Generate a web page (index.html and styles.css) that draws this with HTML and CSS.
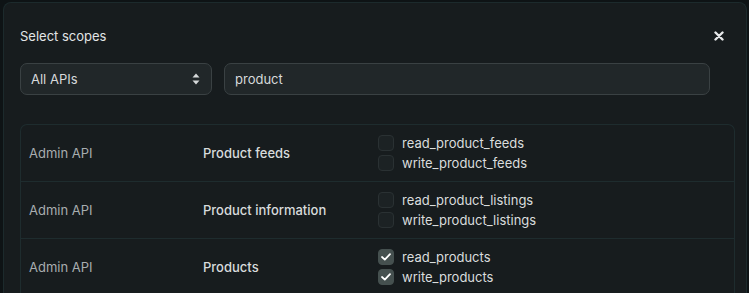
FILE: index.html
```html
<!DOCTYPE html>
<html>
<head>
<meta charset="utf-8">
<link rel="stylesheet" href="styles.css">
</head>
<body>
<div class="modal">
  <div class="header">
    <h2 class="title">Select scopes</h2>
    <button class="close" aria-label="Close">
      <svg width="10" height="10" viewBox="0 0 10 10"><path d="M1.5 1.5 L8.5 8.5 M8.5 1.5 L1.5 8.5" stroke="#e6e8e9" stroke-width="2.4" stroke-linecap="round"/></svg>
    </button>
  </div>
  <div class="filters">
    <div class="select">
      <span>All APIs</span>
      <svg class="arrows" width="8" height="12" viewBox="0 0 8 12"><path d="M4 0.5 L7.5 4.5 H0.5 Z M4 11.5 L7.5 7.5 H0.5 Z" fill="#d6d9da"/></svg>
    </div>
    <div class="input">product</div>
  </div>
  <div class="table">
    <div class="row">
      <div class="api">Admin API</div>
      <div class="name">Product feeds</div>
      <div class="scopes">
        <label class="scope"><span class="box"></span>read_product_feeds</label>
        <label class="scope"><span class="box"></span>write_product_feeds</label>
      </div>
    </div>
    <div class="row">
      <div class="api">Admin API</div>
      <div class="name">Product information</div>
      <div class="scopes">
        <label class="scope"><span class="box"></span>read_product_listings</label>
        <label class="scope"><span class="box"></span>write_product_listings</label>
      </div>
    </div>
    <div class="row">
      <div class="api">Admin API</div>
      <div class="name">Products</div>
      <div class="scopes">
        <label class="scope"><span class="box checked"><svg width="10" height="8" viewBox="0 0 10 8"><path d="M1 4 L3.8 6.6 L9 1.2" stroke="#fff" stroke-width="1.8" fill="none" stroke-linecap="round" stroke-linejoin="round"/></svg></span>read_products</label>
        <label class="scope"><span class="box checked"><svg width="10" height="8" viewBox="0 0 10 8"><path d="M1 4 L3.8 6.6 L9 1.2" stroke="#fff" stroke-width="1.8" fill="none" stroke-linecap="round" stroke-linejoin="round"/></svg></span>write_products</label>
      </div>
    </div>
  </div>
</div>
</body>
</html>
```

FILE: styles.css
```css
* { box-sizing: border-box; }
html, body {
  margin: 0;
  padding: 0;
  background: #0e1315;
  height: 293px;
  overflow: hidden;
}
body {
  padding: 2px 2px 0 3px;
  font-family: Inter, "Noto Sans", sans-serif;
  font-size: 13px;
  color: #d6d9da;
}
.modal {
  background: #171c1e;
  border: 1px solid #1c2a2c;
  border-bottom: none;
  border-radius: 8px 8px 0 0;
  height: 291px;
  padding: 0 11px 0 16px;
}
.header {
  display: flex;
  align-items: center;
  justify-content: space-between;
  height: 65px;
  padding: 1px 11px 0 0;
  margin-bottom: -5px;
}
.title {
  margin: 0;
  font-size: 13px;
  font-weight: 400;
  color: #e2e5e6;
}
.close {
  background: none;
  border: none;
  padding: 0;
  width: 10px;
  height: 10px;
  display: flex;
}
.filters {
  display: flex;
  gap: 12px;
  padding-right: 25px;
}
.select, .input {
  height: 32px;
  background: #212729;
  border: 1px solid #3a4143;
  border-radius: 7px;
  display: flex;
  align-items: center;
  color: #d7dadb;
}
.select {
  width: 192px;
  padding: 0 11px 0 10px;
  justify-content: space-between;
}
.input {
  flex: 1;
  padding: 0 10px;
}
.table {
  margin-top: 29px;
  border: 1px solid #1e2c2e;
  border-bottom: none;
  border-radius: 7px 7px 0 0;
}
.row {
  display: grid;
  grid-template-columns: 174px 175px 1fr;
  align-items: center;
  height: 57px;
  padding-left: 8px;
  border-bottom: 1px solid #1e2c2e;
}
.api { color: #a8adaf; }
.name { color: #d8dbdc; font-weight: 500; }
.scopes {
  display: flex;
  flex-direction: column;
  gap: 4px;
}
.scope {
  display: flex;
  align-items: center;
  gap: 8px;
  color: #dadddd;
  height: 16px;
}
.box {
  width: 16px;
  height: 16px;
  border-radius: 4px;
  background: #1c2224;
  border: 1px solid #2a3133;
  display: flex;
  align-items: center;
  justify-content: center;
}
.box.checked {
  background: #45504f;
  border-color: #45504f;
}
```
